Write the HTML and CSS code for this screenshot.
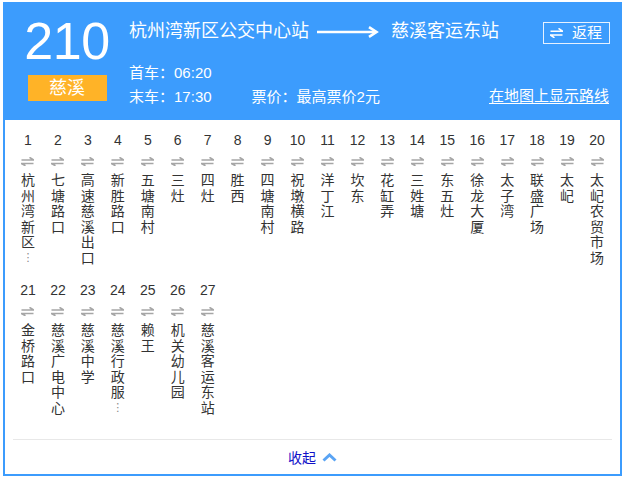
FILE: index.html
```html
<!DOCTYPE html>
<html lang="zh">
<head>
<meta charset="utf-8">
<title>210 慈溪</title>
<link rel="stylesheet" href="styles.css">
</head>
<body>
<div class="widget">
  <div class="header">
    <div class="line-id">
      <div class="num">210</div>
      <div class="badge">慈溪</div>
    </div>
    <div class="info">
      <div class="route">
        <span class="from">杭州湾新区公交中心站</span>
        <svg class="route-arrow" width="62" height="12" viewBox="0 0 62 12"><path d="M0 6 H59" stroke="#fff" stroke-width="2.4" fill="none"/><path d="M52 1.2 L59.5 6 L52 10.8" stroke="#fff" stroke-width="2.6" fill="none" stroke-linejoin="miter"/></svg>
        <span class="to">慈溪客运东站</span>
        <a class="return"><svg width="13" height="10" viewBox="0 0 13 10"><path d="M0.5 3.2 H12.5 L8.5 0.4" stroke="#fff" stroke-width="1.6" fill="none"/><path d="M12.5 7 H0.5 L4.5 9.8" stroke="#fff" stroke-width="1.6" fill="none"/></svg><span>返程</span></a>
      </div>
      <div class="times">
        <div class="t">首车<span class="colon">：</span>06:20</div>
        <div class="t last"><span>末车<span class="colon">：</span>17:30</span><span class="price">票价<span class="colon">：</span>最高票价2元</span><a class="map">在地图上显示路线</a></div>
      </div>
    </div>
  </div>

  <div class="stops">
    <div class="stop"><div class="no">1</div><svg class="ic" viewBox="0 0 13 9"><path d="M0.5 3 H12.5 L8.5 0.3" /><path d="M12.5 6.5 H0.5 L4.5 8.8" /></svg><div class="name">杭州湾新区<span class="dots">⋮</span></div></div>
    <div class="stop"><div class="no">2</div><svg class="ic" viewBox="0 0 13 9"><path d="M0.5 3 H12.5 L8.5 0.3" /><path d="M12.5 6.5 H0.5 L4.5 8.8" /></svg><div class="name">七塘路口</div></div>
    <div class="stop"><div class="no">3</div><svg class="ic" viewBox="0 0 13 9"><path d="M0.5 3 H12.5 L8.5 0.3" /><path d="M12.5 6.5 H0.5 L4.5 8.8" /></svg><div class="name">高速慈溪出口</div></div>
    <div class="stop"><div class="no">4</div><svg class="ic" viewBox="0 0 13 9"><path d="M0.5 3 H12.5 L8.5 0.3" /><path d="M12.5 6.5 H0.5 L4.5 8.8" /></svg><div class="name">新胜路口</div></div>
    <div class="stop"><div class="no">5</div><svg class="ic" viewBox="0 0 13 9"><path d="M0.5 3 H12.5 L8.5 0.3" /><path d="M12.5 6.5 H0.5 L4.5 8.8" /></svg><div class="name">五塘南村</div></div>
    <div class="stop"><div class="no">6</div><svg class="ic" viewBox="0 0 13 9"><path d="M0.5 3 H12.5 L8.5 0.3" /><path d="M12.5 6.5 H0.5 L4.5 8.8" /></svg><div class="name">三灶</div></div>
    <div class="stop"><div class="no">7</div><svg class="ic" viewBox="0 0 13 9"><path d="M0.5 3 H12.5 L8.5 0.3" /><path d="M12.5 6.5 H0.5 L4.5 8.8" /></svg><div class="name">四灶</div></div>
    <div class="stop"><div class="no">8</div><svg class="ic" viewBox="0 0 13 9"><path d="M0.5 3 H12.5 L8.5 0.3" /><path d="M12.5 6.5 H0.5 L4.5 8.8" /></svg><div class="name">胜西</div></div>
    <div class="stop"><div class="no">9</div><svg class="ic" viewBox="0 0 13 9"><path d="M0.5 3 H12.5 L8.5 0.3" /><path d="M12.5 6.5 H0.5 L4.5 8.8" /></svg><div class="name">四塘南村</div></div>
    <div class="stop"><div class="no">10</div><svg class="ic" viewBox="0 0 13 9"><path d="M0.5 3 H12.5 L8.5 0.3" /><path d="M12.5 6.5 H0.5 L4.5 8.8" /></svg><div class="name">祝墩横路</div></div>
    <div class="stop"><div class="no">11</div><svg class="ic" viewBox="0 0 13 9"><path d="M0.5 3 H12.5 L8.5 0.3" /><path d="M12.5 6.5 H0.5 L4.5 8.8" /></svg><div class="name">洋丁江</div></div>
    <div class="stop"><div class="no">12</div><svg class="ic" viewBox="0 0 13 9"><path d="M0.5 3 H12.5 L8.5 0.3" /><path d="M12.5 6.5 H0.5 L4.5 8.8" /></svg><div class="name">坎东</div></div>
    <div class="stop"><div class="no">13</div><svg class="ic" viewBox="0 0 13 9"><path d="M0.5 3 H12.5 L8.5 0.3" /><path d="M12.5 6.5 H0.5 L4.5 8.8" /></svg><div class="name">花缸弄</div></div>
    <div class="stop"><div class="no">14</div><svg class="ic" viewBox="0 0 13 9"><path d="M0.5 3 H12.5 L8.5 0.3" /><path d="M12.5 6.5 H0.5 L4.5 8.8" /></svg><div class="name">三姓塘</div></div>
    <div class="stop"><div class="no">15</div><svg class="ic" viewBox="0 0 13 9"><path d="M0.5 3 H12.5 L8.5 0.3" /><path d="M12.5 6.5 H0.5 L4.5 8.8" /></svg><div class="name">东五灶</div></div>
    <div class="stop"><div class="no">16</div><svg class="ic" viewBox="0 0 13 9"><path d="M0.5 3 H12.5 L8.5 0.3" /><path d="M12.5 6.5 H0.5 L4.5 8.8" /></svg><div class="name">徐龙大厦</div></div>
    <div class="stop"><div class="no">17</div><svg class="ic" viewBox="0 0 13 9"><path d="M0.5 3 H12.5 L8.5 0.3" /><path d="M12.5 6.5 H0.5 L4.5 8.8" /></svg><div class="name">太子湾</div></div>
    <div class="stop"><div class="no">18</div><svg class="ic" viewBox="0 0 13 9"><path d="M0.5 3 H12.5 L8.5 0.3" /><path d="M12.5 6.5 H0.5 L4.5 8.8" /></svg><div class="name">联盛广场</div></div>
    <div class="stop"><div class="no">19</div><svg class="ic" viewBox="0 0 13 9"><path d="M0.5 3 H12.5 L8.5 0.3" /><path d="M12.5 6.5 H0.5 L4.5 8.8" /></svg><div class="name">太屺</div></div>
    <div class="stop"><div class="no">20</div><svg class="ic" viewBox="0 0 13 9"><path d="M0.5 3 H12.5 L8.5 0.3" /><path d="M12.5 6.5 H0.5 L4.5 8.8" /></svg><div class="name">太屺农贸市场</div></div>
    <div class="stop"><div class="no">21</div><svg class="ic" viewBox="0 0 13 9"><path d="M0.5 3 H12.5 L8.5 0.3" /><path d="M12.5 6.5 H0.5 L4.5 8.8" /></svg><div class="name">金桥路口</div></div>
    <div class="stop"><div class="no">22</div><svg class="ic" viewBox="0 0 13 9"><path d="M0.5 3 H12.5 L8.5 0.3" /><path d="M12.5 6.5 H0.5 L4.5 8.8" /></svg><div class="name">慈溪广电中心</div></div>
    <div class="stop"><div class="no">23</div><svg class="ic" viewBox="0 0 13 9"><path d="M0.5 3 H12.5 L8.5 0.3" /><path d="M12.5 6.5 H0.5 L4.5 8.8" /></svg><div class="name">慈溪中学</div></div>
    <div class="stop"><div class="no">24</div><svg class="ic" viewBox="0 0 13 9"><path d="M0.5 3 H12.5 L8.5 0.3" /><path d="M12.5 6.5 H0.5 L4.5 8.8" /></svg><div class="name">慈溪行政服<span class="dots">⋮</span></div></div>
    <div class="stop"><div class="no">25</div><svg class="ic" viewBox="0 0 13 9"><path d="M0.5 3 H12.5 L8.5 0.3" /><path d="M12.5 6.5 H0.5 L4.5 8.8" /></svg><div class="name">赖王</div></div>
    <div class="stop"><div class="no">26</div><svg class="ic" viewBox="0 0 13 9"><path d="M0.5 3 H12.5 L8.5 0.3" /><path d="M12.5 6.5 H0.5 L4.5 8.8" /></svg><div class="name">机关幼儿园</div></div>
    <div class="stop"><div class="no">27</div><svg class="ic" viewBox="0 0 13 9"><path d="M0.5 3 H12.5 L8.5 0.3" /><path d="M12.5 6.5 H0.5 L4.5 8.8" /></svg><div class="name">慈溪客运东站</div></div>
  </div>

  <div class="footer">
    <a class="collapse">收起<svg width="15" height="9" viewBox="0 0 15 9"><path d="M1.5 7.5 L7.5 2 L13.5 7.5" stroke="#5aa4f4" stroke-width="3" fill="none"/></svg></a>
  </div>
</div>
</body>
</html>
```

FILE: styles.css
```css
* { box-sizing: border-box; }

html, body {
  margin: 0;
  padding: 0;
  background: #fff;
}

body {
  font-family: "Liberation Sans", "Noto Sans CJK SC", sans-serif;
  color: #333;
}

.widget {
  width: 619px;
  margin: 2px 0 0 3px;
  border: 2px solid #3c9cfd;
  background: #fff;
}

/* ---------- header ---------- */
.header {
  display: flex;
  height: 116px;
  background: #3c9cfd;
  color: #fff;
}

.line-id {
  width: 124px;
  padding-top: 11px;
  display: flex;
  flex-direction: column;
  align-items: center;
}

.num {
  font-size: 52px;
  line-height: 52px;
  letter-spacing: -0.5px;
}

.badge {
  margin-top: 8px;
  width: 79px;
  height: 26px;
  background: #ffb327;
  color: #fff;
  font-size: 18px;
  line-height: 26px;
  text-align: center;
}

.info {
  flex: 1;
  padding: 15px 10px 0 0;
}

.route {
  display: flex;
  align-items: center;
  height: 24px;
  font-size: 18px;
  line-height: 24px;
}

.route-arrow {
  display: block;
  margin: 2px 12px 0 8px;
}

.return {
  margin-left: auto;
  margin-top: 4px;
  height: 22px;
  width: 67px;
  border: 1px solid #e6f1ff;
  display: flex;
  align-items: center;
  padding-left: 6px;
  font-size: 15px;
  line-height: 20px;
  color: #fff;
}

.return svg {
  display: block;
  margin-right: 9px;
}

.times {
  margin-top: 17px;
  font-size: 15px;
  line-height: 23px;
}

.colon {
  font-family: "Noto Sans CJK TC", sans-serif;
}

.t.last {
  display: flex;
}

.price {
  margin-left: 40px;
}

.map {
  margin-left: auto;
  margin-right: 1px;
  color: #fff;
  text-decoration: underline;
  text-underline-offset: 2px;
}

/* ---------- stops ---------- */
.stops {
  display: grid;
  grid-template-columns: repeat(20, 1fr);
  grid-auto-rows: 150px;
  padding: 10px 8px 0;
}

.stop {
  display: flex;
  flex-direction: column;
  align-items: center;
}

.no {
  font-size: 14px;
  line-height: 20px;
  color: #333;
}

.ic {
  display: block;
  width: 13px;
  height: 9px;
  margin-top: 7px;
  fill: none;
  stroke: #a6a6a6;
  stroke-width: 1.6;
}

.name {
  margin-top: 6px;
  width: 14px;
  font-family: "Noto Sans CJK SC", sans-serif;
  font-size: 14px;
  line-height: 15.5px;
  color: #333;
  text-align: center;
}

.dots {
  display: block;
  font-family: "DejaVu Sans", sans-serif;
  font-size: 11px;
  line-height: 15px;
  color: #888;
}

/* ---------- footer ---------- */
.footer {
  margin: 9px 8px 0;
  border-top: 1px solid #e8e8e8;
  height: 35px;
  display: flex;
  justify-content: center;
  align-items: center;
}

.collapse {
  display: flex;
  align-items: center;
  font-family: "Noto Sans CJK SC", sans-serif;
  font-size: 14px;
  line-height: 34px;
  color: #1010c8;
}

.collapse svg {
  display: block;
  margin-left: 6px;
}
```
